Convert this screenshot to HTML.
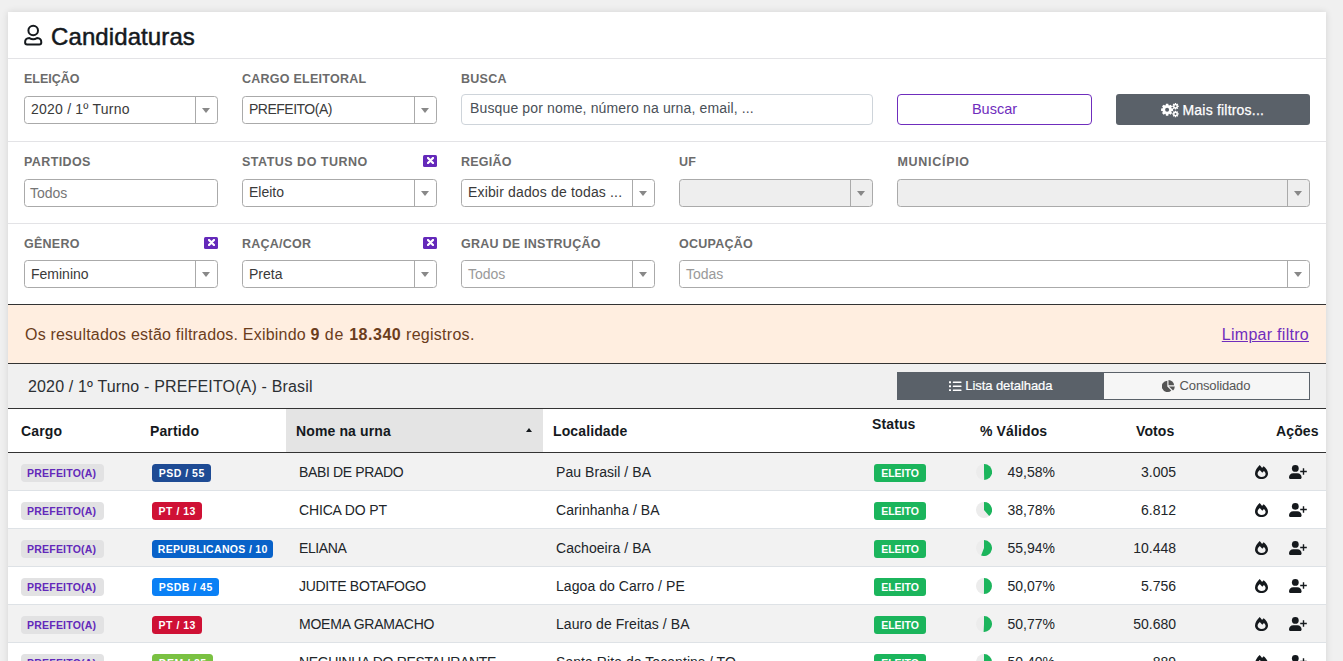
<!DOCTYPE html>
<html lang="pt-BR">
<head>
<meta charset="utf-8">
<title>Candidaturas</title>
<style>
*{box-sizing:border-box;margin:0;padding:0}
html,body{width:1343px;height:661px;overflow:hidden;background:#f0f0f0}
body{font-family:"Liberation Sans",sans-serif;color:#212529;font-size:14px;position:relative}
.card{position:absolute;left:8px;top:12px;width:1318px;height:660px;background:#fff;box-shadow:0 0 7px rgba(0,0,0,.12)}
.abs{position:absolute}
h1{position:absolute;left:51px;top:22px;font-size:24px;font-weight:400;line-height:30px;color:#15191d;letter-spacing:.1px;-webkit-text-stroke:.5px #15191d}
.hr{position:absolute;left:8px;width:1318px;height:1px;background:#e3e3e6}
.lbl{position:absolute;font-size:12.5px;font-weight:700;color:#6b6b6b;letter-spacing:.25px;line-height:14px;white-space:nowrap}
.sel{position:absolute;height:28px;border:1px solid #aaa;border-radius:3.5px;background:#fff;font-size:14px;line-height:25px;padding-left:6px;color:#3a3a3a;white-space:nowrap;overflow:hidden}
.sel.dis{background:#eee}
.sel.ph{color:#999}
.sel i{position:absolute;right:0;top:0;width:22px;height:26px;border-left:1px solid #aaa}
.sel i:after{content:"";position:absolute;left:6px;top:11px;border-left:4px solid transparent;border-right:4px solid transparent;border-top:5px solid #888}
.x{position:absolute;width:14px;height:12px;background:#6429ba;border-radius:1.5px;margin-top:-.3px}
.x svg{position:absolute;left:3.5px;top:2.1px}

.alert{position:absolute;left:8px;top:304px;width:1318px;height:60px;background:#ffeee0;border-top:1px solid #333;border-bottom:1px solid #333;font-size:16px;color:#6b3d1c}
.alert .t{position:absolute;left:17px;top:20px;line-height:20px;white-space:nowrap;letter-spacing:.28px}
.alert a{position:absolute;right:17px;letter-spacing:.28px;top:20px;line-height:20px;color:#6f2dbd;text-decoration:underline;white-space:nowrap}
.tbar{position:absolute;left:8px;top:364px;width:1318px;height:45px;background:#f0f0f0;border-bottom:1px solid #333}
.tbar .t{position:absolute;left:20px;top:13px;letter-spacing:.16px;font-size:16px;line-height:20px;color:#2b2f33;white-space:nowrap}
.bg{position:absolute;top:372px;height:28px;font-size:13px;line-height:26px;text-align:center;border:1px solid #5a6169;white-space:nowrap}
.th{position:absolute;font-weight:700;letter-spacing:.12px;font-size:14px;line-height:16px;color:#15191d;white-space:nowrap}
.row{position:absolute;left:8px;width:1318px;height:38px;border-bottom:1px solid #dee2e6;font-size:14px;color:#212529}
.row.o{background:#f2f2f2}
.row>*{position:absolute;white-space:nowrap}
.b{top:11px;height:18px;border-radius:3px;font-size:10.5px;font-weight:700;line-height:18px;color:#fff;padding:0 6px;letter-spacing:.3px}
.b.c{left:13px;background:#e2e2e3;color:#6329ba;letter-spacing:.22px;width:83px;border-radius:4px}
.b.p{left:144px;padding:0;text-align:center;letter-spacing:.5px;text-indent:.5px;border-radius:3.5px}
.b.e{left:866px;background:#1bb55c;width:52px;text-align:center;padding:0;letter-spacing:0}
.n{left:291px;top:10px;line-height:18px;letter-spacing:-.35px}
.l{left:548px;top:10px;line-height:18px;letter-spacing:.06px}
.pc{right:271px;top:10px;line-height:18px}
.v{right:150px;top:10px;line-height:18px}
.pie{left:968px;top:11px}
.fi{left:1247px;top:12px}
.up{left:1281px;top:12px}
.bt{font-size:13px;line-height:18px;white-space:nowrap}
</style>
</head>
<body>
<div class="card"></div>
<svg class="abs" style="left:24px;top:24px" width="19" height="22" viewBox="0 0 19 22" fill="none" stroke="#15191d" stroke-width="2" stroke-linejoin="round"><circle cx="9.200" cy="6.500" r="4.800"/><path d="M1.100 18.300C1.100 15.700 2.900 14.200 5.400 14.100Q9.200 16.300 13 14.100C15.500 14.200 17.300 15.700 17.300 18.300 17.300 19.600 16.500 20.500 15.300 20.500H3.100C1.900 20.500 1.100 19.600 1.100 18.300Z"/></svg>
<h1>Candidaturas</h1>
<div class="hr" style="top:58px"></div>

<div class="lbl" style="left:24px;top:72px;letter-spacing:0">ELEIÇÃO</div>
<div class="lbl" style="left:242px;top:72px">CARGO ELEITORAL</div>
<div class="lbl" style="left:461px;top:72px">BUSCA</div>
<div class="sel" style="left:24px;top:96px;width:194px"><span style="letter-spacing:.22px">2020 / 1º Turno</span><i></i></div>
<div class="sel" style="left:242px;top:96px;width:195px"><span style="letter-spacing:-.5px">PREFEITO(A)</span><i></i></div>
<div class="abs" style="left:461px;top:94px;width:412px;height:31px;border:1px solid #ced4da;border-radius:4px;font-size:14px;letter-spacing:.14px;line-height:27px;padding-left:8px;color:#495057">Busque por nome, número na urna, email, ...</div>
<div class="abs" style="left:897px;top:94px;width:195px;height:31px;border:1px solid #6f2dbd;border-radius:4px;font-size:14.5px;line-height:29px;text-align:center;color:#6f2dbd">Buscar</div>
<div class="abs" style="left:1116px;top:94px;width:194px;height:31px;border-radius:3px;background:#5a6169"></div>
<svg class="abs" style="left:1160.500px;top:103px" width="18" height="14.500" viewBox="0 0 18 14.500"><path fill="#fff" fill-rule="evenodd" d="M10.46 5.24L12.09 5.52L12.09 7.88L10.46 8.16L10.22 8.75L11.17 10.10L9.50 11.77L8.15 10.82L7.56 11.06L7.28 12.69L4.92 12.69L4.64 11.06L4.05 10.82L2.70 11.77L1.03 10.10L1.98 8.75L1.74 8.16L0.11 7.88L0.11 5.52L1.74 5.24L1.98 4.65L1.03 3.30L2.70 1.63L4.05 2.58L4.64 2.34L4.92 0.71L7.28 0.71L7.56 2.34L8.15 2.58L9.50 1.63L11.17 3.30L10.22 4.65ZM4.10 6.70a2.0 2.0 0 1 0 4.0 0a2.0 2.0 0 1 0 -4.0 0ZM16.78 2.54L17.74 2.66L17.74 3.94L16.78 4.06L16.65 4.37L17.24 5.14L16.34 6.04L15.57 5.45L15.26 5.58L15.14 6.54L13.86 6.54L13.74 5.58L13.43 5.45L12.66 6.04L11.76 5.14L12.35 4.37L12.22 4.06L11.26 3.94L11.26 2.66L12.22 2.54L12.35 2.23L11.76 1.46L12.66 0.56L13.43 1.15L13.74 1.02L13.86 0.06L15.14 0.06L15.26 1.02L15.57 1.15L16.34 0.56L17.24 1.46L16.65 2.23ZM13.50 3.30a1.0 1.0 0 1 0 2.0 0a1.0 1.0 0 1 0 -2.0 0ZM16.78 10.14L17.74 10.26L17.74 11.54L16.78 11.66L16.65 11.97L17.24 12.74L16.34 13.64L15.57 13.05L15.26 13.18L15.14 14.14L13.86 14.14L13.74 13.18L13.43 13.05L12.66 13.64L11.76 12.74L12.35 11.97L12.22 11.66L11.26 11.54L11.26 10.26L12.22 10.14L12.35 9.83L11.76 9.06L12.66 8.16L13.43 8.75L13.74 8.62L13.86 7.66L15.14 7.66L15.26 8.62L15.57 8.75L16.34 8.16L17.24 9.06L16.65 9.83ZM13.50 10.90a1.0 1.0 0 1 0 2.0 0a1.0 1.0 0 1 0 -2.0 0Z"/></svg>
<div class="abs mf" style="left:1182.500px;top:102.400px;font-size:14px;line-height:17px;color:#fff;white-space:nowrap;letter-spacing:.2px;-webkit-text-stroke:.25px #fff">Mais filtros...</div>
<div class="hr" style="top:141px"></div>

<div class="lbl" style="left:24px;top:155px;letter-spacing:.4px">PARTIDOS</div>
<div class="lbl" style="left:242px;top:155px;letter-spacing:.5px">STATUS DO TURNO</div>
<div class="lbl" style="left:461px;top:155px">REGIÃO</div>
<div class="lbl" style="left:679px;top:155px">UF</div>
<div class="lbl" style="left:897.500px;top:155px;letter-spacing:.7px">MUNICÍPIO</div>
<div class="sel ph" style="left:24px;top:179px;width:194px;color:#757575;padding-left:5px"><span style="position:relative;top:1px">Todos</span></div>
<div class="sel" style="left:242px;top:179px;width:195px"><span>Eleito</span><i></i></div>
<div class="sel" style="left:461px;top:179px;width:194px"><span style="letter-spacing:.16px">Exibir dados de todas ...</span><i></i></div>
<div class="sel dis" style="left:679px;top:179px;width:194px"><i></i></div>
<div class="sel dis" style="left:897px;top:179px;width:413px"><i></i></div>
<div class="x" style="left:423px;top:155px"><svg width="7" height="7" viewBox="0 0 7 7"><path d="M1 1L6 6M6 1L1 6" stroke="#fff" stroke-width="2.300" stroke-linecap="round"/></svg></div>
<div class="x" style="left:204px;top:237px"><svg width="7" height="7" viewBox="0 0 7 7"><path d="M1 1L6 6M6 1L1 6" stroke="#fff" stroke-width="2.300" stroke-linecap="round"/></svg></div>
<div class="x" style="left:423px;top:237px"><svg width="7" height="7" viewBox="0 0 7 7"><path d="M1 1L6 6M6 1L1 6" stroke="#fff" stroke-width="2.300" stroke-linecap="round"/></svg></div>
<div class="hr" style="top:223px"></div>

<div class="lbl" style="left:24px;top:237px">GÊNERO</div>
<div class="lbl" style="left:242px;top:237px">RAÇA/COR</div>
<div class="lbl" style="left:461px;top:237px">GRAU DE INSTRUÇÃO</div>
<div class="lbl" style="left:679px;top:237px">OCUPAÇÃO</div>
<div class="sel" style="left:24px;top:260px;width:194px;padding-top:1px"><span>Feminino</span><i></i></div>
<div class="sel" style="left:242px;top:260px;width:195px;padding-top:1px"><span>Preta</span><i></i></div>
<div class="sel ph" style="left:461px;top:260px;width:194px;padding-top:1px"><span>Todos</span><i></i></div>
<div class="sel ph" style="left:679px;top:260px;width:631px;padding-top:1px"><span>Todas</span><i></i></div>

<div class="alert"><span class="t"><span style="letter-spacing:.2px">Os resultados estão filtrados. Exibindo </span><b>9</b><span style="letter-spacing:.7px"> de </span><b style="letter-spacing:.53px">18.340</b> registros.</span><a>Limpar filtro</a></div>
<div class="tbar"><span class="t">2020 / 1º Turno - PREFEITO(A) - Brasil</span></div>
<div class="bg" style="left:897px;width:207px;background:#5a6169;color:#fff"></div><svg class="abs" style="left:949px;top:380.500px" width="12.500" height="10.500" viewBox="0 0 12.500 10.500" fill="#fff"><rect x="0" y="0.200" width="2" height="2" rx=".3"/><rect x="0" y="4.200" width="2" height="2" rx=".3"/><rect x="0" y="8.200" width="2" height="2" rx=".3"/><rect x="3.800" y="0.500" width="8.700" height="1.500" rx=".5"/><rect x="3.800" y="4.500" width="8.700" height="1.500" rx=".5"/><rect x="3.800" y="8.500" width="8.700" height="1.500" rx=".5"/></svg><div class="abs bt" style="left:965.300px;top:377px;color:#fff;letter-spacing:-.07px;-webkit-text-stroke:.2px #fff">Lista detalhada</div>
<div class="bg" style="left:1103px;width:207px;background:#f6f6f6;color:#555"></div><svg class="abs" style="left:1162.400px;top:379.800px" width="12.800" height="12" viewBox="0 0 12.800 12" fill="#555"><path d="M5.300 0.800V6.400L9.300 10.400A5.600 5.600 0 1 1 5.300 0.800Z"/><path d="M6.500 0A5.600 5.600 0 0 1 12.100 5.300H6.500Z"/><path d="M7 6.500H12.800A5.600 5.600 0 0 1 11 10.500Z"/></svg><div class="abs bt" style="left:1179.600px;top:377px;color:#555;letter-spacing:-.15px">Consolidado</div>
<div class="abs" style="left:286px;top:409px;width:257px;height:43px;background:#e4e4e4"></div>
<div class="th" style="left:21px;top:423px">Cargo</div>
<div class="th" style="left:150px;top:423px">Partido</div>
<div class="th" style="left:296px;top:423px">Nome na urna</div>
<div class="th" style="left:553px;top:423px">Localidade</div>
<div class="th" style="left:872px;top:416px">Status</div>
<div class="th" style="left:980px;top:423px">% Válidos</div>
<div class="th" style="left:1136px;top:423px">Votos</div>
<div class="th" style="left:1276px;top:423px">Ações</div>
<div class="abs" style="left:525.700px;top:428px;border-left:3.750px solid transparent;border-right:3.750px solid transparent;border-bottom:4.500px solid #15191d"></div>
<div class="abs" style="left:8px;top:452px;width:1318px;height:1px;background:#333"></div>
<div class="row o" style="top:453px"><span class="b c">PREFEITO(A)</span><span class="b p" style="background:#1e4b94;width:59px">PSD / 55</span><span class="n">BABI DE PRADO</span><span class="l">Pau Brasil / BA</span><span class="b e">ELEITO</span><svg class="pie" width="16" height="16" viewBox="0 0 16 16"><circle cx="8" cy="8" r="8" fill="#ececec"/><path d="M8 8V0A8 8 0 0 1 8.21 16.00Z" fill="#1bb55c"/></svg><span class="pc">49,58%</span><span class="v">3.005</span><svg class="fi" width="13" height="14" viewBox="0 0 13 14"><path fill="#15191d" fill-rule="evenodd" d="M4.700 0C5.600 1 6.400 1.900 7.100 2.900 7.600 2.300 8.100 1.800 8.700 1.300 10.900 3.200 13 5.800 13 8.400 13 11.600 10.100 14 6.500 14S0 11.600 0 8.400C0 5.500 2.200 2.400 4.700 0zM4.800 4.900L7.300 7.800 8.900 6C10 7 10.600 8 10.600 8.900 10.600 10.700 8.800 11.900 6.600 11.900 4.400 11.900 2.600 10.700 2.600 8.700 2.600 7.300 3.500 6.100 4.800 4.900z"/></svg><svg class="up" width="18" height="14" viewBox="0 0 18 14"><g fill="#15191d"><circle cx="6.300" cy="3.400" r="3.400"/><path d="M0 12.500C0 10 1.800 8.200 4.200 8.200h4.200c2.400 0 4.200 1.800 4.200 4.300 0 .9-.6 1.500-1.400 1.500H1.400C.6 14 0 13.400 0 12.500z"/><path d="M13.800 3.200h1.400v2.600h2.600v1.400h-2.600v2.600h-1.400V7.200h-2.600V5.800h2.600z"/></g></svg></div>
<div class="row" style="top:491px"><span class="b c">PREFEITO(A)</span><span class="b p" style="background:#cf1135;width:50px">PT / 13</span><span class="n" style="letter-spacing:-0.15px">CHICA DO PT</span><span class="l">Carinhanha / BA</span><span class="b e">ELEITO</span><svg class="pie" width="16" height="16" viewBox="0 0 16 16"><circle cx="8" cy="8" r="8" fill="#ececec"/><path d="M8 8V0A8 8 0 0 1 13.18 14.09Z" fill="#1bb55c"/></svg><span class="pc">38,78%</span><span class="v">6.812</span><svg class="fi" width="13" height="14" viewBox="0 0 13 14"><path fill="#15191d" fill-rule="evenodd" d="M4.700 0C5.600 1 6.400 1.900 7.100 2.900 7.600 2.300 8.100 1.800 8.700 1.300 10.900 3.200 13 5.800 13 8.400 13 11.600 10.100 14 6.500 14S0 11.600 0 8.400C0 5.500 2.200 2.400 4.700 0zM4.800 4.900L7.300 7.800 8.900 6C10 7 10.600 8 10.600 8.900 10.600 10.700 8.800 11.900 6.600 11.900 4.400 11.900 2.600 10.700 2.600 8.700 2.600 7.300 3.500 6.100 4.800 4.900z"/></svg><svg class="up" width="18" height="14" viewBox="0 0 18 14"><g fill="#15191d"><circle cx="6.300" cy="3.400" r="3.400"/><path d="M0 12.500C0 10 1.800 8.200 4.200 8.200h4.200c2.400 0 4.200 1.800 4.200 4.300 0 .9-.6 1.500-1.400 1.500H1.400C.6 14 0 13.400 0 12.500z"/><path d="M13.800 3.200h1.400v2.600h2.600v1.400h-2.600v2.600h-1.400V7.200h-2.600V5.800h2.600z"/></g></svg></div>
<div class="row o" style="top:529px"><span class="b c">PREFEITO(A)</span><span class="b p" style="background:#0862c9;width:121px;letter-spacing:.32px">REPUBLICANOS / 10</span><span class="n" style="letter-spacing:-0.38px">ELIANA</span><span class="l">Cachoeira / BA</span><span class="b e">ELEITO</span><svg class="pie" width="16" height="16" viewBox="0 0 16 16"><circle cx="8" cy="8" r="8" fill="#ececec"/><path d="M8 8V0A8 8 0 1 1 5.08 15.45Z" fill="#1bb55c"/></svg><span class="pc">55,94%</span><span class="v">10.448</span><svg class="fi" width="13" height="14" viewBox="0 0 13 14"><path fill="#15191d" fill-rule="evenodd" d="M4.700 0C5.600 1 6.400 1.900 7.100 2.900 7.600 2.300 8.100 1.800 8.700 1.300 10.900 3.200 13 5.800 13 8.400 13 11.600 10.100 14 6.500 14S0 11.600 0 8.400C0 5.500 2.200 2.400 4.700 0zM4.800 4.900L7.300 7.800 8.900 6C10 7 10.600 8 10.600 8.900 10.600 10.700 8.800 11.900 6.600 11.900 4.400 11.900 2.600 10.700 2.600 8.700 2.600 7.300 3.500 6.100 4.800 4.900z"/></svg><svg class="up" width="18" height="14" viewBox="0 0 18 14"><g fill="#15191d"><circle cx="6.300" cy="3.400" r="3.400"/><path d="M0 12.500C0 10 1.800 8.200 4.200 8.200h4.200c2.400 0 4.200 1.800 4.200 4.300 0 .9-.6 1.500-1.400 1.500H1.400C.6 14 0 13.400 0 12.500z"/><path d="M13.800 3.200h1.400v2.600h2.600v1.400h-2.600v2.600h-1.400V7.200h-2.600V5.800h2.600z"/></g></svg></div>
<div class="row" style="top:567px"><span class="b c">PREFEITO(A)</span><span class="b p" style="background:#0a80f5;width:67px">PSDB / 45</span><span class="n" style="letter-spacing:-0.29px">JUDITE BOTAFOGO</span><span class="l">Lagoa do Carro / PE</span><span class="b e">ELEITO</span><svg class="pie" width="16" height="16" viewBox="0 0 16 16"><circle cx="8" cy="8" r="8" fill="#ececec"/><path d="M8 8V0A8 8 0 1 1 7.96 16.00Z" fill="#1bb55c"/></svg><span class="pc">50,07%</span><span class="v">5.756</span><svg class="fi" width="13" height="14" viewBox="0 0 13 14"><path fill="#15191d" fill-rule="evenodd" d="M4.700 0C5.600 1 6.400 1.900 7.100 2.900 7.600 2.300 8.100 1.800 8.700 1.300 10.900 3.200 13 5.800 13 8.400 13 11.600 10.100 14 6.500 14S0 11.600 0 8.400C0 5.500 2.200 2.400 4.700 0zM4.800 4.900L7.300 7.800 8.900 6C10 7 10.600 8 10.600 8.900 10.600 10.700 8.800 11.900 6.600 11.900 4.400 11.900 2.600 10.700 2.600 8.700 2.600 7.300 3.500 6.100 4.800 4.900z"/></svg><svg class="up" width="18" height="14" viewBox="0 0 18 14"><g fill="#15191d"><circle cx="6.300" cy="3.400" r="3.400"/><path d="M0 12.500C0 10 1.800 8.200 4.200 8.200h4.200c2.400 0 4.200 1.800 4.200 4.300 0 .9-.6 1.500-1.400 1.500H1.400C.6 14 0 13.400 0 12.500z"/><path d="M13.800 3.200h1.400v2.600h2.600v1.400h-2.600v2.600h-1.400V7.200h-2.600V5.800h2.600z"/></g></svg></div>
<div class="row o" style="top:605px"><span class="b c">PREFEITO(A)</span><span class="b p" style="background:#cf1135;width:50px">PT / 13</span><span class="n" style="letter-spacing:-0.23px">MOEMA GRAMACHO</span><span class="l">Lauro de Freitas / BA</span><span class="b e">ELEITO</span><svg class="pie" width="16" height="16" viewBox="0 0 16 16"><circle cx="8" cy="8" r="8" fill="#ececec"/><path d="M8 8V0A8 8 0 1 1 7.61 15.99Z" fill="#1bb55c"/></svg><span class="pc">50,77%</span><span class="v">50.680</span><svg class="fi" width="13" height="14" viewBox="0 0 13 14"><path fill="#15191d" fill-rule="evenodd" d="M4.700 0C5.600 1 6.400 1.900 7.100 2.900 7.600 2.300 8.100 1.800 8.700 1.300 10.900 3.200 13 5.800 13 8.400 13 11.600 10.100 14 6.500 14S0 11.600 0 8.400C0 5.500 2.200 2.400 4.700 0zM4.800 4.900L7.300 7.800 8.900 6C10 7 10.600 8 10.600 8.900 10.600 10.700 8.800 11.900 6.600 11.900 4.400 11.900 2.600 10.700 2.600 8.700 2.600 7.300 3.500 6.100 4.800 4.900z"/></svg><svg class="up" width="18" height="14" viewBox="0 0 18 14"><g fill="#15191d"><circle cx="6.300" cy="3.400" r="3.400"/><path d="M0 12.500C0 10 1.800 8.200 4.200 8.200h4.200c2.400 0 4.200 1.800 4.200 4.300 0 .9-.6 1.500-1.400 1.500H1.400C.6 14 0 13.400 0 12.500z"/><path d="M13.800 3.200h1.400v2.600h2.600v1.400h-2.600v2.600h-1.400V7.200h-2.600V5.800h2.600z"/></g></svg></div>
<div class="row" style="top:643px"><span class="b c">PREFEITO(A)</span><span class="b p" style="background:#7ac142;width:61px">DEM / 25</span><span class="n">NEGUINHA DO RESTAURANTE</span><span class="l">Santa Rita do Tocantins / TO</span><span class="b e">ELEITO</span><svg class="pie" width="16" height="16" viewBox="0 0 16 16"><circle cx="8" cy="8" r="8" fill="#ececec"/><path d="M8 8V0A8 8 0 1 1 7.80 16.00Z" fill="#1bb55c"/></svg><span class="pc">50,40%</span><span class="v">889</span><svg class="fi" width="13" height="14" viewBox="0 0 13 14"><path fill="#15191d" fill-rule="evenodd" d="M4.700 0C5.600 1 6.400 1.900 7.100 2.900 7.600 2.300 8.100 1.800 8.700 1.300 10.900 3.200 13 5.800 13 8.400 13 11.600 10.100 14 6.500 14S0 11.600 0 8.400C0 5.500 2.200 2.400 4.700 0zM4.800 4.900L7.300 7.800 8.900 6C10 7 10.600 8 10.600 8.900 10.600 10.700 8.800 11.900 6.600 11.900 4.400 11.900 2.600 10.700 2.600 8.700 2.600 7.300 3.500 6.100 4.800 4.900z"/></svg><svg class="up" width="18" height="14" viewBox="0 0 18 14"><g fill="#15191d"><circle cx="6.300" cy="3.400" r="3.400"/><path d="M0 12.500C0 10 1.800 8.200 4.200 8.200h4.200c2.400 0 4.200 1.800 4.200 4.300 0 .9-.6 1.500-1.400 1.500H1.400C.6 14 0 13.400 0 12.500z"/><path d="M13.800 3.200h1.400v2.600h2.600v1.400h-2.600v2.600h-1.400V7.200h-2.600V5.800h2.600z"/></g></svg></div>

</body>
</html>
